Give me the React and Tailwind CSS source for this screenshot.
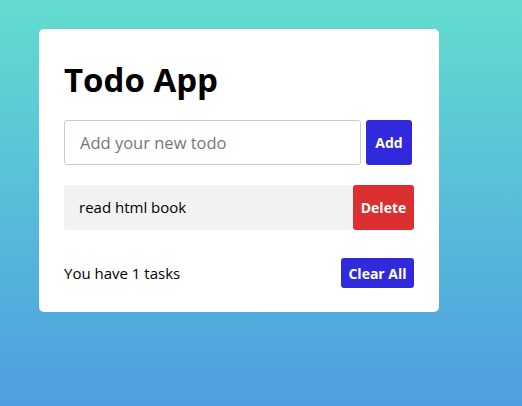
import React from "react";

function App() {
  return (
    <div
      className="min-h-[406px] w-full bg-gradient-to-b from-[#63dccf] to-[#4f9ddf] pt-[29px] pl-[39px]"
      style={{ fontFamily: '"Open Sans", "Noto Sans", sans-serif' }}
    >
      <div className="w-[400px] rounded-[5px] bg-white px-[25px] pt-[25px] pb-[24px]">
        <h1 className="mt-[4px] text-[33px] font-bold leading-[43px] text-black">Todo App</h1>

        <div className="mt-[19px] flex w-[348px] gap-[5px]">
          <input
            className="h-[45px] flex-1 rounded-[3px] border border-[#cccccc] px-[15px] text-[16.5px] text-black outline-none placeholder:text-[#767676]"
            placeholder="Add your new todo"
          />
          <button className="h-[45px] w-[46px] rounded-[3px] bg-[#3129dc] text-[14px] font-bold text-white">
            Add
          </button>
        </div>

        <div className="mt-[20px] flex h-[45px] items-center rounded-[3px] bg-[#f2f2f2]">
          <span className="flex-1 pl-[15px] text-[15px] text-black">read html book</span>
          <button className="h-[45px] w-[61px] rounded-[3px] bg-[#dc2f2f] text-[14px] font-bold text-white">
            Delete
          </button>
        </div>

        <div className="mt-[28px] flex items-center justify-between">
          <span className="text-[15px] text-black">You have 1 tasks</span>
          <button className="h-[30px] w-[73px] rounded-[3px] bg-[#3129dc] text-[14px] font-bold text-white">
            Clear All
          </button>
        </div>
      </div>
    </div>
  );
}

export default App;
